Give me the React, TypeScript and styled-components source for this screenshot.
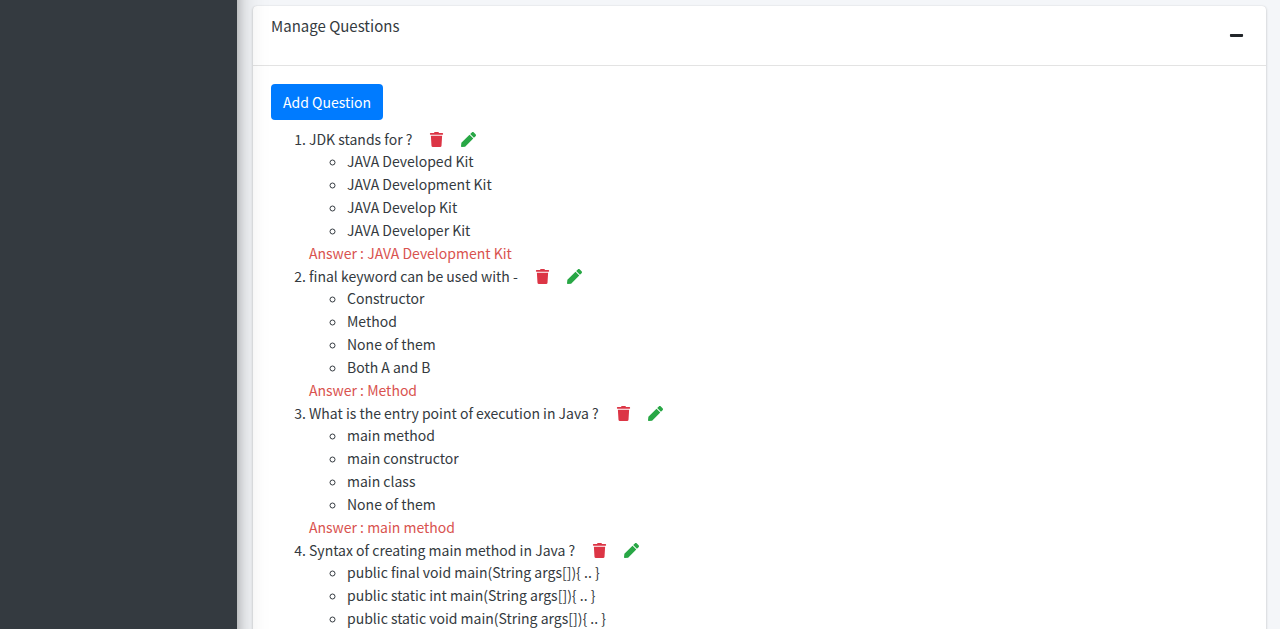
import React from "react";
import styled, { createGlobalStyle } from "styled-components";
import { FaMinus, FaTrash, FaPen } from "react-icons/fa";

const GlobalStyle = createGlobalStyle`
  * { box-sizing: border-box; }
  body {
    margin: 0;
    background: #f4f6f9;
    color: #343a40;
    font-family: "Noto Sans CJK SC", "Noto Sans", sans-serif;
    font-size: 14px;
    line-height: 23px;
  }
`;

const Shell = styled.div`
  display: flex;
  height: 100vh;
  overflow: hidden;
`;

const Sidebar = styled.aside`
  flex: 0 0 237px;
  margin: -48px 0;
  z-index: 1;
  background: #343a40;
  box-shadow: 0 0 28px rgba(0, 0, 0, 0.25), 0 0 10px rgba(0, 0, 0, 0.22);
`;

const Content = styled.main`
  flex: 1;
  min-width: 0;
  padding: 6px 14px 0 16px;
`;

const Card = styled.section`
  min-height: 100vh;
  background: #fff;
  border-radius: 4px;
  box-shadow: 0 0 1px rgba(0, 0, 0, 0.13), 0 1px 3px rgba(0, 0, 0, 0.2);
`;

const CardHeader = styled.header`
  display: flex;
  justify-content: space-between;
  align-items: flex-start;
  height: 60px;
  padding: 8px 12px 0 18px;
  border-bottom: 1px solid #e3e3e3;
`;

const Title = styled.h3`
  margin: 0;
  font-size: 15px;
  font-weight: 400;
  line-height: 23px;
`;

const CollapseButton = styled.button`
  display: flex;
  padding: 14px 10px;
  border: 0;
  background: transparent;
  color: #212529;
  font-size: 15px;
  cursor: pointer;
`;

const CardBody = styled.div`
  padding: 18px;
`;

const AddButton = styled.button`
  display: block;
  height: 36px;
  padding: 0 12px;
  border: 0;
  border-radius: 4px;
  background: #007bff;
  color: #fff;
  font: inherit;
  cursor: pointer;
`;

const Questions = styled.ol`
  margin: 8px 0 0;
  padding-left: 38px;
`;

const Question = styled.li`
  line-height: 22px;
`;

const Options = styled.ul`
  margin: 0;
  padding-left: 38px;
  list-style: circle;
  line-height: 23px;
`;

const IconButton = styled.button<{ $tone: "delete" | "edit" }>`
  height: 15px;
  margin-left: 17px;
  padding: 0;
  border: 0;
  background: transparent;
  color: ${(p) => (p.$tone === "delete" ? "#dc3545" : "#28a745")};
  font-size: 15px;
  line-height: 15px;
  vertical-align: -2px;
  cursor: pointer;

  svg {
    display: block;
  }
`;

const Answer = styled.div`
  color: #d9534f;
  line-height: 23px;
`;

const questions = [
  {
    text: "JDK stands for ?",
    options: ["JAVA Developed Kit", "JAVA Development Kit", "JAVA Develop Kit", "JAVA Developer Kit"],
    answer: "JAVA Development Kit",
  },
  {
    text: "final keyword can be used with -",
    options: ["Constructor", "Method", "None of them", "Both A and B"],
    answer: "Method",
  },
  {
    text: "What is the entry point of execution in Java ?",
    options: ["main method", "main constructor", "main class", "None of them"],
    answer: "main method",
  },
  {
    text: "Syntax of creating main method in Java ?",
    options: [
      "public final void main(String args[]){ .. }",
      "public static int main(String args[]){ .. }",
      "public static void main(String args[]){ .. }",
    ],
  },
];

export default function App() {
  return (
    <>
      <GlobalStyle />
      <Shell>
        <Sidebar />
        <Content>
          <Card>
            <CardHeader>
              <Title>Manage Questions</Title>
              <CollapseButton type="button" aria-label="Collapse">
                <FaMinus />
              </CollapseButton>
            </CardHeader>
            <CardBody>
              <AddButton type="button">Add Question</AddButton>
              <Questions>
                {questions.map((q) => (
                  <Question key={q.text}>
                    {q.text}
                    <IconButton type="button" $tone="delete" aria-label="Delete question">
                      <FaTrash />
                    </IconButton>
                    <IconButton type="button" $tone="edit" aria-label="Edit question">
                      <FaPen />
                    </IconButton>
                    <Options>
                      {q.options.map((o) => (
                        <li key={o}>{o}</li>
                      ))}
                    </Options>
                    {q.answer && <Answer>Answer : {q.answer}</Answer>}
                  </Question>
                ))}
              </Questions>
            </CardBody>
          </Card>
        </Content>
      </Shell>
    </>
  );
}
